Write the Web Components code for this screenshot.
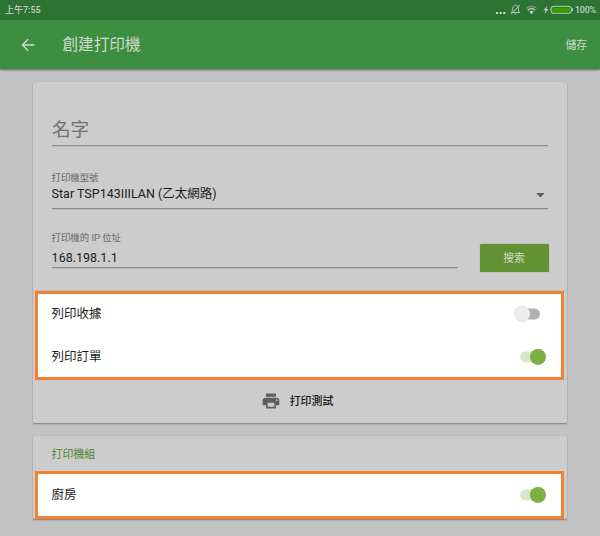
<!DOCTYPE html>
<html lang="zh-Hant">
<head>
<meta charset="utf-8">
<title>創建打印機</title>
<style>
html,body{margin:0;height:100%}
body{background:#c3c3c3;font-family:Roboto,"Noto Sans CJK TC",sans-serif;color:#1b1b1b;overflow:hidden}
</style>
</head>
<body>
<printer-page></printer-page>
<script>
const define = (name, html) => {
  const t = document.createElement('template');
  t.innerHTML = html;
  customElements.define(name, class extends HTMLElement {
    constructor() {
      super();
      this.attachShadow({mode: 'open'}).append(t.content.cloneNode(true));
    }
  });
};

define('status-bar', `
<style>
:host{display:flex;height:20px;box-sizing:border-box;background:#2d7331;color:#c4d2c5;align-items:center;padding:0 4px 0 5px;font-size:9px;line-height:20px}
.time{flex:1;font-weight:500;font-size:9px;line-height:18px;margin-top:-1px}
svg{display:block;flex:none}
.pct{width:21px;margin-left:1px;font-size:8.900px;font-weight:500;letter-spacing:-.2px;white-space:nowrap}
</style>
<span class="time">上午7:55</span>
<svg width="79" height="20" viewBox="0 0 79 20" fill="none" stroke="#b9cbb9">
  <g fill="#c4d2c5" stroke="none"><rect x="1" y="12" width="2.200" height="2"/><rect x="4.600" y="12" width="2.200" height="2"/><rect x="8.200" y="12" width="2.200" height="2"/></g>
  <path d="M16.300 12.500h8.400l-1.400-1.800V8.400c0-1.900-1-3.300-2.800-3.300s-2.800 1.400-2.800 3.300v2.300zM19.500 14h2M25 4.800l-9 9.600" stroke-width=".95"/>
  <path d="M31.200 8.400c3-2.700 7.600-2.700 10.600 0" stroke-width="1.200" opacity=".5"/>
  <path d="M32.700 10.200c2.200-1.900 5.400-1.900 7.600 0" stroke-width="1.400"/>
  <path d="M34.400 11.700a3 3 0 0 1 4.200 0l-2.100 2.600z" fill="#c4d2c5" stroke="none"/>
  <path d="M52.500 5.600l-4 4.700h2l-.9 3.800 3.700-5h-1.900z" fill="#c4d2c5" stroke="none"/>
  <rect x="56" y="6.300" width="20.500" height="7" rx="3.400" stroke-width="1.100"/>
  <rect x="57.200" y="7.500" width="18" height="4.700" rx="2" fill="#379f00" stroke="none"/>
  <path d="M77.500 8.500v2.500" stroke-width="1"/>
</svg>
<span class="pct">100%</span>`);

define('app-bar', `
<style>
:host{display:flex;height:49px;background:#3d8e40;color:#cedbce;align-items:center;box-shadow:0 1px 2px rgba(0,0,0,.5);padding:0 13px 0 20px;position:relative}
svg{display:block;width:16px;height:16px}
h1{flex:1;margin:0 0 0 26.500px;font-size:15.600px;font-weight:400;line-height:24px}
.save{font-size:10.800px;line-height:20px;margin-top:2px}
</style>
<svg viewBox="0 0 24 24" fill="#cedbce"><path d="M21.500 10.800H6.300l6.600-6.600L11.500 2.600 2.300 12l9.200 9.400 1.400-1.600L6.300 13.200h15.200z"/></svg>
<h1><slot></slot></h1><span class="save"><slot name="action"></slot></span>`);

define('paper-card', `
<style>:host{display:flex;flex-direction:column;background:#ccc;border-radius:1.500px;box-shadow:0 1px 1.500px rgba(0,0,0,.35),0 0 1px rgba(0,0,0,.2);margin:0 33px 13px;box-sizing:border-box}</style>
<slot></slot>`);

define('text-field', `
<style>
:host{display:flex;flex-direction:column;justify-content:flex-end;box-sizing:border-box;border-bottom:1px solid #8b8b8b;box-shadow:0 .5px 0 #aaa}
.label{font-size:9.400px;line-height:14px;color:#686868}
.value{display:flex;align-items:center;justify-content:space-between;font-size:12.500px;line-height:18px}
:host([empty]) .value{font-size:18.600px;line-height:28px;color:#717171}
</style>
<span class="label"><slot name="label"></slot></span>
<div class="value"><span><slot></slot></span><slot name="icon"></slot></div>`);

define('green-button', `
<style>:host{display:block;width:69px;height:28px;box-sizing:border-box;border-radius:1.500px;background:#629233;color:#cfdac4;text-align:center;font-size:10.800px;line-height:29px;box-shadow:0 0 1px #629233}</style>
<slot></slot>`);

define('toggle-switch', `
<style>
:host{display:block;width:32px;height:20px}
svg{display:block;overflow:visible;filter:drop-shadow(0 .8px .6px rgba(0,0,0,.28))}
.track{fill:#b0b0b0}.thumb{fill:#ececec}
:host([on]) .track{fill:#d7e8c6}:host([on]) .thumb{fill:#7cb142}
:host([on]) .off,:host(:not([on])) .on{display:none}
.base{filter:none}
.base+svg{margin-top:-20px}
</style>
<svg class="base off" width="32" height="20"><rect class="track" x="1" y="4.500" width="25" height="11" rx="5.500"/></svg>
<svg class="off" width="32" height="20"><circle class="thumb" cx="8.300" cy="9.800" r="7.900"/></svg>
<svg class="base on" width="32" height="20"><rect class="track" x="6.200" y="4.500" width="24" height="11" rx="5.500"/></svg>
<svg class="on" width="32" height="20"><circle class="thumb" cx="24" cy="9.800" r="7.900"/></svg>`);

define('option-row', `
<style>:host{display:flex;flex:none;box-sizing:border-box;align-items:center;justify-content:space-between;padding:0 15px 0 13.600px;font-size:12.500px;line-height:20px}</style>
<span><slot></slot></span><slot name="control"></slot>`);

define('highlight-group', `
<style>:host{display:flex;flex-direction:column;box-sizing:border-box;border:3px solid #f08232;background:#fff;margin:0 3px 0 2px}</style>
<slot></slot>`);

define('printer-page', `
<style>
:host{display:block}
.first{margin-top:13px;height:341px}
.fields{padding:0 19px;height:208px;box-sizing:border-box}
.name{height:64px;padding-bottom:1px}
.model{height:63px;padding-bottom:5px}
.model,.address{text-indent:-.4px}
.ip{display:flex;justify-content:space-between;align-items:flex-start}
.address{width:406px;height:59px}
.address span{display:block;margin-bottom:4px}
.ip green-button{margin:34.500px -.5px 0 0}
.divider{height:1px;background:#b6b6b6;opacity:.6}
.options{height:89px}
.receipt{height:39px}
.order{height:44px;padding-top:4px}
.test{display:flex;align-items:center;justify-content:center;height:43px;font-size:10.900px;line-height:18px;color:#151515;gap:9px;font-weight:500;padding-right:6px}
.test svg{display:block;width:20px;height:20px;margin-top:-1px}
.second{height:83px}
h2{font-size:10.900px;font-weight:400;line-height:16px;color:#4c852a;margin:0;padding:11px 19px 8px 18.600px}
.kitchen{height:49px}.kitchen option-row{height:42px}
</style>
<status-bar></status-bar>
<app-bar>創建打印機<span slot="action">儲存</span></app-bar>
<paper-card class="first">
  <div class="fields">
    <text-field class="name" empty>名字</text-field>
    <text-field class="model"><span slot="label">打印機型號</span>Star TSP143IIILAN (乙太網路)
      <svg slot="icon" width="16" height="18" viewBox="0 0 16 18"><path d="M4.200 8h8.400L8.400 12.600z" fill="#5d5d5d"/></svg></text-field>
    <div class="ip">
      <text-field class="address"><span slot="label">打印機的 IP 位址</span>168.198.1.1</text-field>
      <green-button>搜索</green-button>
    </div>
  </div>
  <div class="divider"></div>
  <highlight-group class="options">
    <option-row class="receipt">列印收據<toggle-switch slot="control"></toggle-switch></option-row>
    <option-row class="order">列印訂單<toggle-switch slot="control" on></toggle-switch></option-row>
  </highlight-group>
  <div class="test"><svg viewBox="0 0 24 24" fill="#5e5e5e"><path d="M19 8H5c-1.660 0-3 1.340-3 3v6h4v4h12v-4h4v-6c0-1.660-1.340-3-3-3zm-3 11H8v-5h8v5zm3-7c-.55 0-1-.45-1-1s.45-1 1-1 1 .45 1 1-.45 1-1 1zm-1-9H6v4h12V3z"/></svg><span>打印測試</span></div>
</paper-card>
<paper-card class="second">
  <h2>打印機組</h2>
  <highlight-group class="kitchen"><option-row>廚房<toggle-switch slot="control" on></toggle-switch></option-row></highlight-group>
</paper-card>`);
</script>
</body>
</html>
